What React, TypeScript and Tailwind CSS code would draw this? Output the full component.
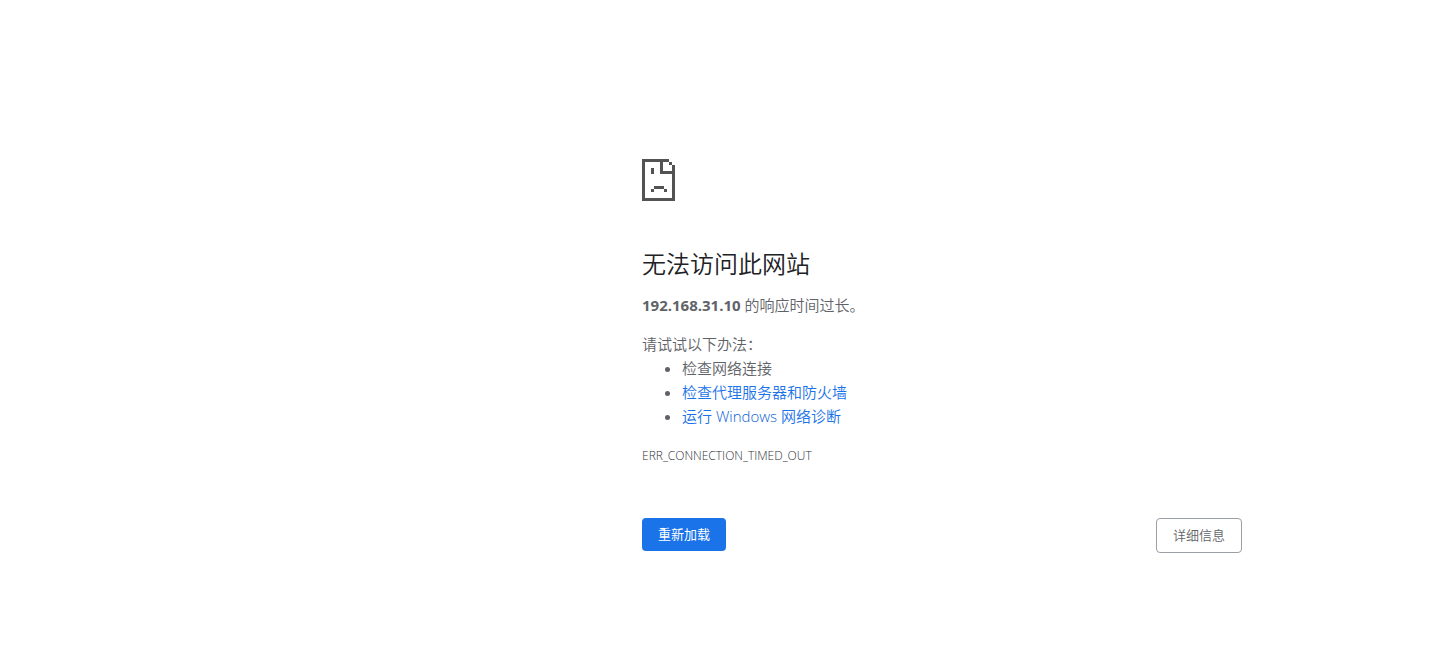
import type { ReactNode } from "react";

function SadPageIcon() {
  return (
    <svg className="h-[42px] w-[33px]" viewBox="0 0 33 42" fill="#535353" shapeRendering="crispEdges" aria-hidden="true">
      <path d="M0 0h27v3h3v3h3v36H0zM3 3v36h27V15H18V3zM21 3v9h9V6h-3V3z" fillRule="evenodd" />
      <path d="M9 9h3v6H9zM12 27h10v3H12zM9 30h3v3H9zM22 30h3v3h-3z" />
    </svg>
  );
}

function SuggestionLink({ children }: { children: ReactNode }) {
  return (
    <a href="#" className="text-[#1a73e8]">
      {children}
    </a>
  );
}

export default function App() {
  return (
    <div className="min-h-screen bg-white font-['Open_Sans','Noto_Sans_CJK_SC',sans-serif] text-[15px] leading-6 font-[350] text-[#5f6368]">
      <main className="mr-auto ml-[642px] max-w-[806px] pt-[159px] pr-[206px]">
        <SadPageIcon />
        <h1 className="mt-12 text-2xl leading-[30px] font-[350] text-[#202124]">无法访问此网站</h1>
        <p className="mt-[14px]">
          <strong className="font-bold">192.168.31.10</strong> 的响应时间过长。
        </p>
        <div className="mt-[15px]">
          <p>请试试以下办法：</p>
          <ul className="list-disc pl-10">
            <li>检查网络连接</li>
            <li>
              <SuggestionLink>检查代理服务器和防火墙</SuggestionLink>
            </li>
            <li>
              <SuggestionLink>
                运行 <span className="text-[#0b5fd6]">Windows</span> 网络诊断
              </SuggestionLink>
            </li>
          </ul>
        </div>
        <p className="mt-4 text-xs leading-6 text-[#303338]">ERR_CONNECTION_TIMED_OUT</p>
        <div className="mt-[50px] flex items-start justify-between text-[13px] leading-[17px]">
          <button type="button" className="rounded bg-[#1a73e8] px-4 py-2 font-normal text-white">
            重新加载
          </button>
          <button type="button" className="rounded border border-[#9aa0a6] bg-white px-4 py-2 text-[#5f6368]">
            详细信息
          </button>
        </div>
      </main>
    </div>
  );
}
